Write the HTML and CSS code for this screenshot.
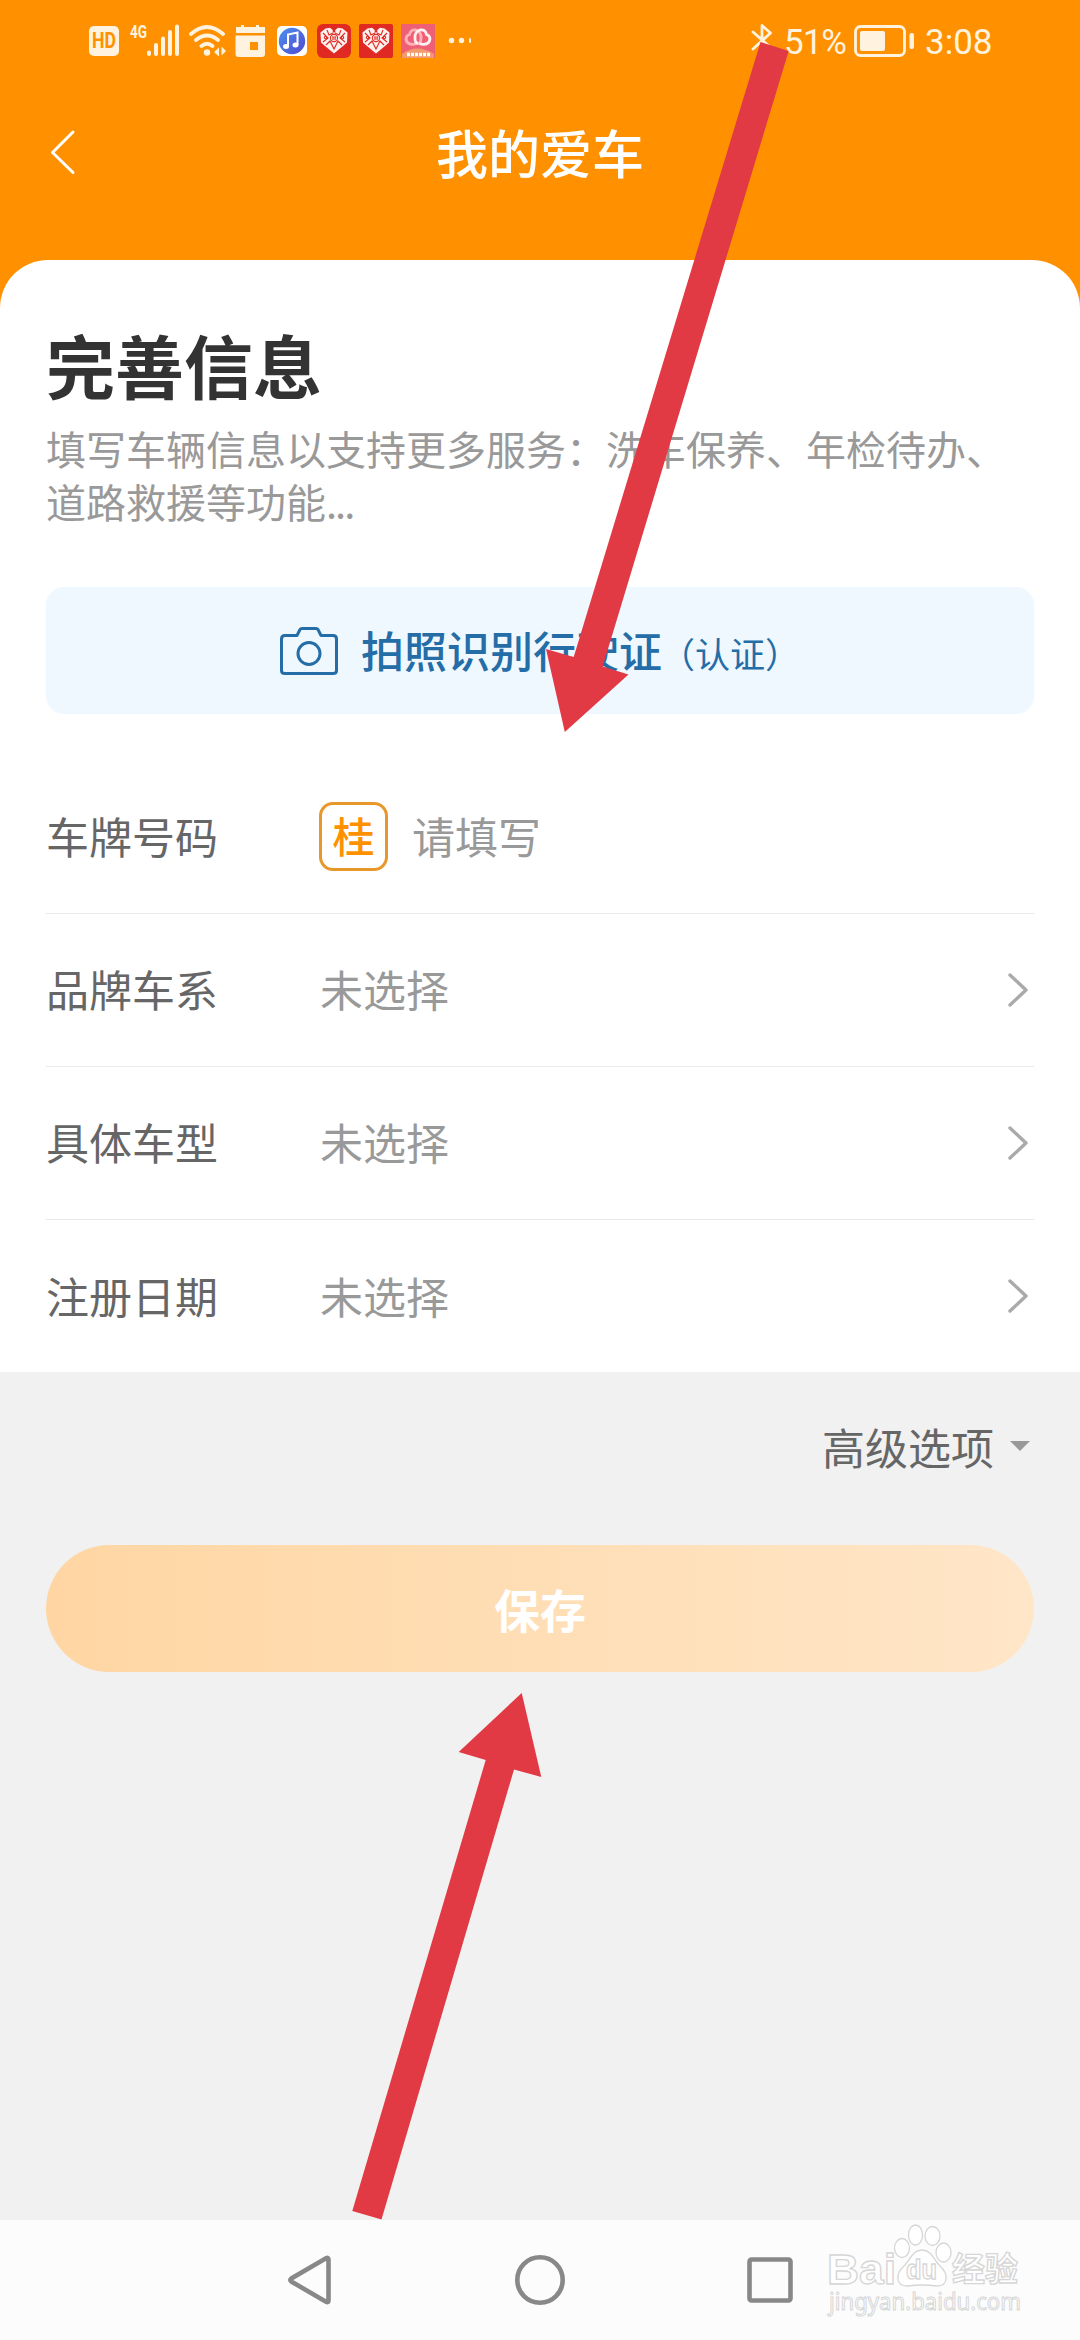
FILE: index.html
```html
<!DOCTYPE html>
<html lang="zh-CN">
<head>
<meta charset="utf-8">
<title>我的爱车</title>
<link rel="stylesheet" href="styles.css">
</head>
<body>
<div class="screen">
  <header class="header">
    <div class="status">
      <svg class="ic-left" width="390" height="44" viewBox="85 19 390 44">
        <rect x="89" y="26" width="30" height="30" rx="5" fill="#fff3df"/>
        <text x="92" y="48" class="hd" textLength="24" lengthAdjust="spacingAndGlyphs">HD</text>
        <text x="130" y="38" class="net" textLength="17" lengthAdjust="spacingAndGlyphs">4G</text>
        <g stroke="#fff3df" stroke-width="4" stroke-linecap="round">
          <path d="M149 52.500v1.500M156 45v9M163 38.500v15.500M170 32v22M177 26.500v27.500"/>
        </g>
        <g fill="none" stroke="#fff3df" stroke-width="3.800" stroke-linecap="round">
          <path d="M191 34q16-14 32 0M196 40q11-9 22 0M201.500 46q5.500-4.500 11 0"/>
        </g>
        <circle cx="207" cy="52.500" r="3.200" fill="#fff3df"/>
        <path d="M214 52l5-4.500v9zM226 51l-4.500-4.500v9z" fill="#fff3df"/>
        <path d="M236 27h5v-2h3v2h12v-2h3v2h6v6h-29z" fill="#fff3df"/>
        <path d="M235.500 35.500h29.500v18.500a3 3 0 0 1-3 3h-23.500a3 3 0 0 1-3-3zM250 42v8h8v-8z" fill="#fff3df" fill-rule="evenodd"/>
        <rect x="277" y="26" width="30" height="30" rx="5" fill="#fff"/>
        <circle cx="292" cy="41" r="13.200" fill="url(#music)"/>
        <path d="M288 46.500v-12l9.500-2v12.500" fill="none" stroke="#fff" stroke-width="2"/>
        <ellipse cx="286" cy="46.500" rx="3" ry="2.500" fill="#fff"/><ellipse cx="295.500" cy="45" rx="3" ry="2.500" fill="#fff"/>
        <rect x="317" y="24" width="34" height="34" rx="6" fill="#df2922"/>
        <rect x="359" y="24" width="34" height="34" rx="2" fill="#df2922"/>
        <g id="h">
          <path d="M334 53.500l-9-7.500-4-3.500-.500-10 5-4 4.500-.800 4 3.300 4-3.300 4.500.800 5 4-.500 10-4 3.500z" fill="#fff1ee"/>
          <g fill="none" stroke="#df2922" stroke-width="1.100">
            <path d="M323 33l5 5-5 4M345 33l-5 5 5 4M327 30l2 5 4-2M341 30l-2 5-4-2M326 45l4-4 4 8 4-8 4 4"/>
            <circle cx="334" cy="38" r="3.600"/><circle cx="325.500" cy="37.500" r="1.200"/><circle cx="342.500" cy="37.500" r="1.200"/>
          </g>
          <path d="M333 36v4M335.200 36v4M332 37.200h4.200M332 39h4.200" stroke="#df2922" stroke-width=".7"/>
          <path d="M334 27.500v5" stroke="#df2922" stroke-width="2.500"/>
        </g>
        <use href="#h" x="42"/>
        <rect x="401" y="24" width="34" height="34" fill="#ef6077"/>
        <g fill="none" stroke-width="2.800">
          <path stroke="#ffb3b9" d="M417 43.500q-8 2.500-10.500-2.500q-1.500-5 3-6.500q1-5.500 6.500-4.500q5.500 2 5 8q0 5-3 5.500"/>
          <path stroke="#fff0f0" d="M419 43.500q8 2.500 10.500-2.500q1.500-5-3-6.500q-1-5.500-6.500-4.500q-5.500 2-5 8q0 5 3 5.500"/>
        </g>
        <path d="M402 54q15-11 32 0v4h-32z" fill="#f19a6e"/>
        <path d="M407 54.500h23" stroke="#fff" stroke-width="3.500" stroke-dasharray="3 1"/>
        <g fill="#fff3df"><circle cx="451.500" cy="40.500" r="2.700"/><circle cx="461.500" cy="40.500" r="2.700"/><rect x="469" y="38" width="2" height="5" rx="1"/></g>
        <defs>
          <linearGradient id="music" x1="0" y1="0" x2="1" y2="1"><stop offset="0" stop-color="#4b92ef"/><stop offset="1" stop-color="#5148cf"/></linearGradient>
        </defs>
      </svg>
      <div class="status-right">
        <svg width="22" height="34" viewBox="0 0 22 34" fill="none" stroke="#fff3df" stroke-width="2.800" stroke-linecap="round" stroke-linejoin="round"><path d="M2 8l17 15-8 8V1.500l8.500 7.500L2 25"/></svg>
        <span class="pct">51%</span>
        <svg width="61" height="34" viewBox="0 0 61 34"><rect x="1.500" y="2.500" width="49" height="29" rx="5" fill="none" stroke="#fff3df" stroke-width="2.800"/><rect x="6" y="7" width="25" height="20" rx="2" fill="#fff3df"/><rect x="55.500" y="9" width="4.500" height="16" rx="2" fill="#fff3df"/></svg>
        <span class="time">3:08</span>
      </div>
    </div>
    <div class="titlebar">
      <svg class="back" width="28" height="48" viewBox="0 0 28 48" fill="none" stroke="#fff" stroke-width="3" stroke-linecap="round" stroke-linejoin="round"><path d="M25 3L4.500 23.500l20.500 20"/></svg>
      <h1 class="title">我的爱车</h1>
    </div>
  </header>

  <main class="card">
    <h2 class="heading">完善信息</h2>
    <p class="desc">填写车辆信息以支持更多服务：洗车保养、年检待办、<br>道路救援等功能<span class="dots">...</span></p>
    <button class="scan">
      <svg width="58" height="48" viewBox="0 0 58 48" fill="none" stroke="#246da6" stroke-width="3" stroke-linejoin="round"><path d="M5 8.500h12l3-6q.6-1 2-1h14q1.400 0 2 1l3 6h12q3.500 0 3.500 3.500v31.500q0 3-3.500 3H5q-3.500 0-3.500-3V12q0-3.500 3.500-3.500z"/><circle cx="29" cy="26.500" r="11"/></svg>
      <span class="scan-text">拍照识别行驶证<small>（认证）</small></span>
    </button>
    <div class="row"><span class="label">车牌号码</span><span class="province">桂</span><span class="value">请填写</span></div>
    <div class="row"><span class="label">品牌车系</span><span class="value">未选择</span><svg class="chev" width="24" height="36" viewBox="0 0 24 36"><path d="M3 3l16 15L3 33"/></svg></div>
    <div class="row"><span class="label">具体车型</span><span class="value">未选择</span><svg class="chev" width="24" height="36" viewBox="0 0 24 36"><path d="M3 3l16 15L3 33"/></svg></div>
    <div class="row"><span class="label">注册日期</span><span class="value">未选择</span><svg class="chev" width="24" height="36" viewBox="0 0 24 36"><path d="M3 3l16 15L3 33"/></svg></div>
  </main>

  <section class="below">
    <div class="advanced">高级选项<svg width="20" height="10" viewBox="0 0 20 10"><path d="M0 0h20L10 10z" fill="#999"/></svg></div>
    <button class="save">保存</button>
  </section>

  <nav class="nav">
    <svg width="46" height="52" viewBox="0 0 46 52"><path d="M41.500 5.500q0-2.500-2.500-1.300L4.300 24.500q-2 1.500 0 3L39 47.800q2.500 1.200 2.500-1.300z"/></svg>
    <svg width="52" height="52" viewBox="0 0 52 52"><circle cx="26" cy="26" r="22.700"/></svg>
    <svg width="46" height="52" viewBox="0 0 46 52"><rect x="2.500" y="5.500" width="41" height="41" rx="2"/></svg>
  </nav>

  <svg class="overlay" width="1080" height="2340" viewBox="0 0 1080 2340">
    <g fill="#e23a45">
      <path d="M760.500 42L788.700 51L602.700 666.500L628.500 674.500L564.800 732L546 649L573.700 657z"/>
      <path d="M521.700 1693L458.700 1752L485.700 1760L352.300 2211L381.500 2219.500L514 1769.500L541.300 1777z"/>
    </g>
    <g class="mark">
      <text x="827" y="2284" font-size="43" class="bold" textLength="69" lengthAdjust="spacingAndGlyphs">Bai</text>
      <ellipse cx="902" cy="2248" rx="7.500" ry="9.500"/><ellipse cx="915.500" cy="2235" rx="7" ry="10"/><ellipse cx="932.500" cy="2236" rx="7.500" ry="9.500"/><ellipse cx="943.500" cy="2252.500" rx="7.500" ry="9.500"/>
      <path d="M922 2250c10 0 12 11 18 16c9 8 8 20-3 20q-15-2-30 0c-11 0-12-12-3-20c6-5 8-16 18-16z"/>
      <text x="906" y="2279" font-size="27" class="bold" textLength="31" lengthAdjust="spacingAndGlyphs">du</text>
      <text x="952" y="2281" font-size="33" class="bold" textLength="66" lengthAdjust="spacingAndGlyphs">经验</text>
      <text x="829" y="2310" font-size="23" textLength="192" lengthAdjust="spacingAndGlyphs" class="url">jingyan.baidu.com</text>
    </g>
  </svg>
</div>
</body>
</html>
```
FILE: styles.css
```css
* { box-sizing: border-box; }
body { margin: 0; font-family: "Noto Sans CJK SC", "Noto Sans", sans-serif; }
h1, h2, p { margin: 0; font-weight: 400; }
button { border: 0; padding: 0; font: inherit; }
svg { display: block; flex: none; }

.screen {
  position: relative;
  width: 1080px;
  height: 2340px;
  overflow: hidden;
  display: flex;
  flex-direction: column;
  background: #f1f1f1;
}

.header { height: 310px; background: #ff9100; flex: none; }
.status {
  height: 82px;
  padding: 0 88px 0 85px;
  display: flex;
  justify-content: space-between;
  align-items: center;
}
.status-right {
  display: flex;
  align-items: center;
  color: #fff3df;
  font: 400 35px/40px Roboto, sans-serif;
}
.pct { width: 62px; margin: 3px 8px 0 11px; letter-spacing: -1px; white-space: nowrap; }
.time { width: 67px; margin: 3px 0 0 10px; white-space: nowrap; }
.hd { font: 700 22px Roboto, sans-serif; fill: #ff9100; }
.net { font: 700 19px Roboto, sans-serif; fill: #fff3df; }

.titlebar {
  height: 142px;
  padding: 0 48px;
  display: grid;
  grid-template-columns: 28px 1fr 28px;
  align-items: center;
}
.title { padding-bottom: 2px; text-align: center; color: #fff; font-size: 52px; font-weight: 500; line-height: 60px; }

.card {
  height: 1112px;
  margin-top: -50px;
  padding: 69px 46px 0;
  flex: none;
  background: #fff;
  border-radius: 48px 48px 0 0;
}
.heading { color: #333; font-size: 69px; font-weight: 700; line-height: 70px; }
.desc { margin-top: 23px; color: #999; font-size: 40px; line-height: 53px; white-space: nowrap; }
.dots { letter-spacing: -2px; }
.scan {
  width: 988px;
  height: 127px;
  margin: 59px 0 47px;
  display: flex;
  align-items: center;
  gap: 23px;
  padding-left: 234px;
  background: #eff7ff;
  border-radius: 18px;
  color: #246da6;
}
.scan-text { font-size: 43px; font-weight: 500; line-height: 60px; white-space: nowrap; }
.scan-text small { font-size: 35px; font-weight: 400; margin-left: -2px; }

.row {
  height: 153px;
  padding-right: 3px;
  display: flex;
  align-items: center;
  border-bottom: 1px solid #e9e9e9;
  font-size: 43px;
  line-height: 60px;
}
.row:last-child { border-bottom: 0; }
.label { width: 273px; padding-bottom: 4px; color: #666; }
.value { flex: 1; padding: 0 0 4px 1px; color: #999; }
.province {
  width: 69px;
  height: 69px;
  margin: 0 23px 2px 0;
  border: 3px solid #e8972a;
  border-radius: 14px;
  color: #ff9100;
  text-align: center;
  font-size: 42px;
  font-weight: 500;
}
.chev { margin-bottom: 1px; fill: none; stroke: #aaa; stroke-width: 3.400; stroke-linecap: round; stroke-linejoin: round; }

.below { flex: 1; padding: 44px 46px 0; }
.advanced {
  height: 60px;
  padding-right: 4px;
  display: flex;
  justify-content: flex-end;
  align-items: center;
  gap: 16px;
  color: #666;
  font-size: 43px;
  line-height: 60px;
}
.save {
  width: 988px;
  height: 127px;
  margin-top: 69px;
  padding-bottom: 1px;
  display: block;
  border-radius: 64px;
  background: linear-gradient(90deg, #ffd6a3, #ffe6c8);
  color: #fff;
  font-size: 46px;
  font-weight: 700;
}

.nav {
  height: 120px;
  padding: 0 287px;
  display: flex;
  justify-content: space-between;
  align-items: center;
  background: #fcfcfc;
}
.nav svg { fill: none; stroke: #888; stroke-width: 4.600; }

.overlay { position: absolute; left: 0; top: 0; }
.mark { fill: #fff; stroke: #d6d6d6; stroke-width: 1.300; }
.mark text { font-family: "Liberation Sans", "Noto Sans CJK SC", sans-serif; }
.mark .bold { font-weight: 700; }
.mark .url { font-family: "Noto Sans", sans-serif; stroke-width: 1; }
```
